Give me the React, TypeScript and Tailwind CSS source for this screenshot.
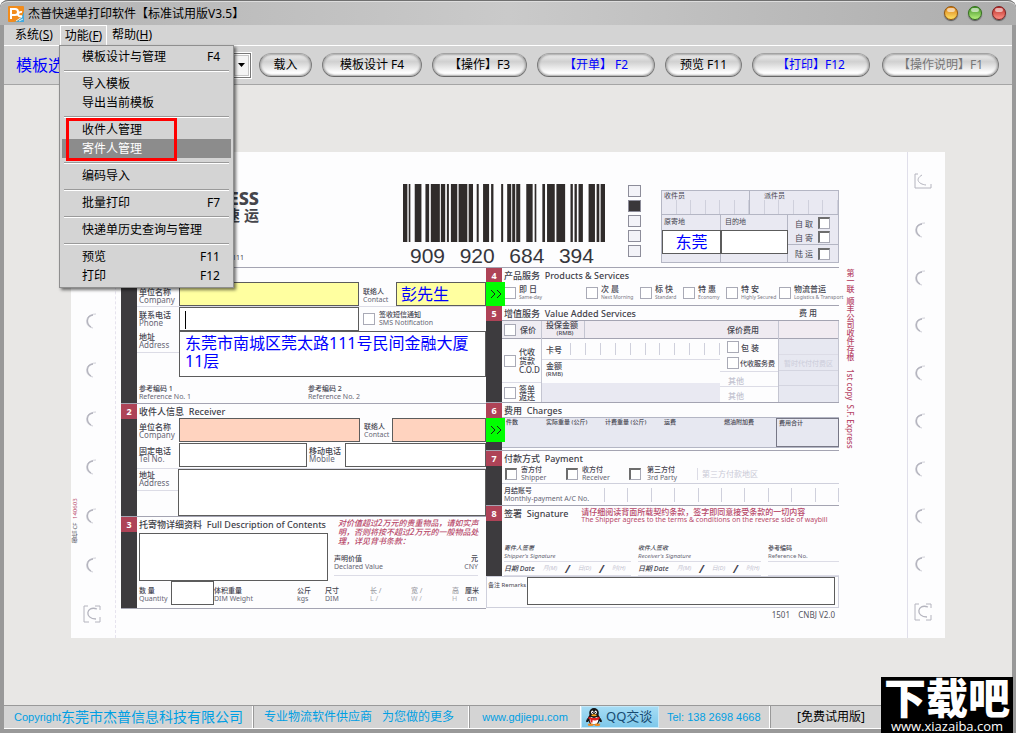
import React from 'react';

type BoxProps = React.InputHTMLAttributes<HTMLInputElement>;

function Field({ className = '', ...rest }: BoxProps) {
  return (
    <input
      {...rest}
      className={`h-6 min-w-0 rounded-none border border-[#5c5c5c] px-1 text-base text-[#0000ff] outline-none ${className}`}
    />
  );
}

function Tick({ className = '', ...rest }: BoxProps) {
  return (
    <input
      type="checkbox"
      {...rest}
      className={`size-3 shrink-0 appearance-none border border-[#a9aab6] bg-white ${className}`}
    />
  );
}

function SunkenTick(props: BoxProps) {
  return <Tick {...props} className="border-t-2 border-l-2 border-t-[#6d6d6d] border-l-[#6d6d6d]" />;
}

type BiProps = { cn: string; en: string; htmlFor?: string; className?: string; size?: string };

function Bi({ cn, en, htmlFor, className = '', size = 'text-[8px]' }: BiProps) {
  const body = (
    <>
      <span className="block font-medium text-[#44444f]">{cn}</span>
      <span className="block text-[#666674]">{en}</span>
    </>
  );
  const cls = `block leading-[8px] whitespace-nowrap ${size} ${className}`;
  return htmlFor ? (
    <label htmlFor={htmlFor} className={cls}>{body}</label>
  ) : (
    <div className={cls}>{body}</div>
  );
}

type SectionProps = {
  no: string;
  cn: string;
  en: string;
  className?: string;
  note?: React.ReactNode;
  children: React.ReactNode;
};

function Section({ no, cn, en, className = '', note, children }: SectionProps) {
  return (
    <section className={`flex border-t border-[#a4a4b2] ${className}`}>
      <div className="w-4 shrink-0 bg-[#3d3b3e]">
        <div className="flex h-[15px] items-center justify-center bg-[#ae4357] text-[9px] leading-none font-bold text-white">
          {no}
        </div>
      </div>
      <div className="flex min-w-0 flex-1 flex-col">
        <div className="flex h-[14px] shrink-0 items-center pl-0.5">
          <h2 className="pt-0.5 text-[9px] leading-[10px] font-medium whitespace-nowrap text-[#3f3f49]">
            {cn}&nbsp;&nbsp;{en}
          </h2>
          {note}
        </div>
        {children}
      </div>
    </section>
  );
}

function Cells({ count, className = '' }: { count: number; className?: string }) {
  return (
    <div className={`flex ${className}`}>
      {Array.from({ length: count }, (_, i) => (
        <div key={i} className="flex-1 border-r border-[#cfd0dc]" />
      ))}
    </div>
  );
}

function Hole() {
  return (
    <svg viewBox="0 0 14 18" className="h-[18px] w-[14px]" fill="none" stroke="#d0d0d8">
      <path d="M11 2C-1 2-1 15 8 16" strokeWidth="1" />
      <path d="M8 3C1 4 1 12 6 15" strokeWidth="1.3" stroke="#b4b4be" />
    </svg>
  );
}

function CornerHole() {
  return (
    <svg viewBox="0 0 18 18" className="size-[18px]" fill="none" stroke="#b4b4be">
      <path d="M5 1H1v16h5M12 1h5v4M17 12v5h-5" />
      <path d="M14 4C3 0 1 14 13 14" strokeWidth="1.3" />
    </svg>
  );
}

const bars: [number, number][] = [
  [190, 203], [207, 212], [225, 245], [257, 268], [273, 300], [303, 316], [321, 327],
  [333, 352], [356, 382], [386, 399], [410, 416], [429, 447], [453, 460], [483, 489],
  [501, 513], [516, 525], [528, 540], [558, 577], [583, 588], [606, 614], [620, 643],
  [648, 674], [690, 697], [702, 709], [714, 727], [744, 763], [768, 776], [780, 793],
];

function Barcode() {
  return (
    <div className="w-[203px] pt-8">
      <svg viewBox="190 0 606 174" preserveAspectRatio="none" className="h-[58px] w-full" fill="#302c2b">
        {bars.map(([a, b]) => (
          <rect key={a} x={a} y="0" width={b - a} height="174" />
        ))}
      </svg>
      <div className="flex justify-between pr-3 pl-[7px] pt-1 font-['Liberation_Sans',sans-serif] text-[21px] leading-[20px] text-[#36363c]">
        <span>909</span><span>920</span><span>684</span><span>394</span>
      </div>
    </div>
  );
}

function RoutingBox() {
  return (
    <div className="mt-[38px] h-[73px] w-[178px] border border-[#b4b6c4] bg-[#e9e9f2] text-[7px] leading-[9px] text-[#44444f]">
      <div className="grid h-6 grid-cols-2 border-b border-[#b4b6c4]">
        <div className="flex flex-col border-r border-[#b4b6c4]">
          <span className="pl-0.5">收件员</span>
          <Cells count={6} className="flex-1" />
        </div>
        <div className="flex flex-col">
          <span className="pl-[14px]">派件员</span>
          <Cells count={6} className="flex-1" />
        </div>
      </div>
      <div className="flex">
        <div className="h-[47px] w-[59px] border-r border-[#b4b6c4]">
          <label htmlFor="origin" className="block h-[15px] pt-0.5 pl-0.5">原寄地</label>
          <Field id="origin" defaultValue="东莞" className="w-[59px] bg-white text-center" />
        </div>
        <div className="h-[47px] w-[67px] border-r border-[#b4b6c4]">
          <label htmlFor="dest" className="block h-[15px] pt-0.5 pl-1">目的地</label>
          <Field id="dest" className="w-[67px] bg-white" />
        </div>
        <div className="flex-1 pt-px text-[8px]">
          {['自 取', '自 寄', '陆 运'].map((t, i) => (
            <label key={t} className={`flex items-center justify-between pr-2 pl-[7px] ${i === 2 ? 'h-[18px] border-t border-[#b4b6c4]' : 'h-[14px]'}`}>
              {t}
              <SunkenTick />
            </label>
          ))}
        </div>
      </div>
    </div>
  );
}

function Arrow({ label }: { label: string }) {
  return (
    <button
      aria-label={label}
      className="absolute top-0 left-full z-10 flex h-6 w-[19px] items-center justify-center bg-[#00ff00]"
    >
      <svg viewBox="0 0 12 10" className="h-[10px] w-3" fill="none" stroke="#1c1c1c">
        <path d="M1 1l4 4-4 4M7 1l4 4-4 4" />
      </svg>
    </button>
  );
}

function LeftColumn() {
  return (
    <div className="w-[365px]">
      <Section no="1" cn="寄件人信息" en="Shipper" className="h-[136px]">
        <div className="relative flex h-6 items-start">
          <Bi cn="单位名称" en="Company" htmlFor="company" className="w-[42px] pt-1.5 pl-0.5" />
          <Field id="company" className="w-[180px] bg-[#ffffa0]" />
          <Bi cn="联络人" en="Contact" htmlFor="contact" size="text-[7px]" className="w-[37px] pt-1.5 pl-1" />
          <Field id="contact" defaultValue="彭先生" className="flex-1 bg-[#ffffa0]" />
          <Arrow label="选择寄件人" />
        </div>
        <div className="flex h-[25px] items-start border-t border-[#dcdce6]">
          <Bi cn="联系电话" en="Phone" htmlFor="phone" className="w-[42px] pt-1 pl-0.5" />
          <div className="relative h-6 w-[180px]">
            <Field id="phone" className="w-full bg-white" />
            <span className="absolute top-1 left-1.5 h-[18px] w-px bg-black" />
          </div>
          <Tick id="sms" className="mt-1.5 ml-1" />
          <Bi cn="签收短信通知" en="SMS Notification" htmlFor="sms" size="text-[7px]" className="pt-1 pl-1" />
        </div>
        <div className="flex h-[47px] items-start">
          <Bi cn="地址" en="Address" htmlFor="address" className="h-[22px] w-[42px] border-b border-[#dcdce6] pt-0.5 pl-0.5" />
          <textarea
            id="address"
            defaultValue={'东莞市南城区莞太路111号民间金融大厦11层'}
            className="h-[46px] flex-1 resize-none overflow-hidden border border-[#5c5c5c] bg-white pt-0.5 pl-[5px] text-base leading-[18px] text-[#0000ff] outline-none"
          />
        </div>
        <div className="flex flex-1 items-center pt-1 pl-0.5">
          <Bi cn="参考编码 1" en="Reference No. 1" size="text-[7px]" className="w-[169px]" />
          <Bi cn="参考编码 2" en="Reference No. 2" size="text-[7px]" />
        </div>
      </Section>
      <Section no="2" cn="收件人信息" en="Receiver" className="h-[113px]">
        <div className="relative flex h-[25px] items-start">
          <Bi cn="单位名称" en="Company" htmlFor="rcompany" className="w-[42px] pt-[5px] pl-0.5" />
          <Field id="rcompany" className="w-[181px] bg-[#ffd3bf]" />
          <Bi cn="联络人" en="Contact" htmlFor="rcontact" size="text-[7px]" className="w-8 pt-[5px] pl-1" />
          <Field id="rcontact" className="flex-1 bg-[#ffd3bf]" />
          <Arrow label="选择收件人" />
        </div>
        <div className="flex h-[25px] items-start">
          <Bi cn="固定电话" en="Tel No." htmlFor="tel" className="w-[42px] pt-1 pl-0.5" />
          <Field id="tel" className="w-32 bg-white" />
          <Bi cn="移动电话" en="Mobile" htmlFor="mobile" className="w-[38px] pt-1 pl-0.5" />
          <Field id="mobile" className="flex-1 bg-white" />
        </div>
        <div className="flex flex-1 items-start border-t border-[#dcdce6]">
          <Bi cn="地址" en="Address" htmlFor="raddress" className="h-[22px] w-[41px] border-b border-[#dcdce6] pt-0.5 pl-0.5" />
          <textarea id="raddress" className="h-[47px] flex-1 resize-none border border-[#5c5c5c] bg-white outline-none" />
        </div>
      </Section>
      <Section no="3" cn="托寄物详细资料" en="Full Description of Contents" className="h-[93px] border-b">
        <div className="flex h-[50px] gap-1.5 pt-0.5 pl-0.5">
          <textarea aria-label="托寄物详细资料" className="h-12 w-[189px] resize-none border border-[#5c5c5c] bg-white outline-none" />
          <div className="relative min-w-0 flex-1 pr-2">
            <p className="absolute -top-[15px] left-1 w-[144px] text-[8px] leading-[9px] font-medium text-[#b8496a] italic">
              对价值超过2万元的贵重物品，请如实声明，否则将按不超过2万元的一般物品处理，详见背书条款：
            </p>
            <div className="mt-[22px] flex justify-between border-b border-[#dcdce6] pb-1">
              <Bi cn="声明价值" en="Declared Value" size="text-[7px]" />
              <Bi cn="元" en="CNY" className="text-right" size="text-[7px]" />
            </div>
          </div>
        </div>
        <div className="flex h-[25px] items-start pl-0.5">
          <Bi cn="数 量" en="Quantity" htmlFor="qty" size="text-[7px]" className="w-8 pt-1.5" />
          <Field id="qty" className="w-[43px] bg-white" />
          <Bi cn="体积重量" en="DIM Weight" size="text-[7px]" className="w-[83px] pt-1.5" />
          <Bi cn="公斤" en="kgs" size="text-[7px]" className="w-[28px] pt-1.5" />
          <Bi cn="尺寸" en="DIM" size="text-[7px]" className="w-[45px] pt-1.5" />
          <Bi cn="长 /" en="L /" size="text-[7px]" className="w-[41px] pt-1.5 opacity-50" />
          <Bi cn="宽 /" en="W /" size="text-[7px]" className="w-[41px] pt-1.5 opacity-50" />
          <Bi cn="高" en="H" size="text-[7px]" className="w-[13px] pt-1.5 opacity-50" />
          <Bi cn="厘米" en="cm" size="text-[7px]" className="pt-1.5 text-center" />
        </div>
      </Section>
    </div>
  );
}

const services: [string, string][] = [
  ['即 日', 'Same-day'], ['次 晨', 'Next Morning'], ['标 快', 'Standard'],
  ['特 惠', 'Economy'], ['特 安', 'Highly Secured'], ['物流普运', 'Logistics & Transport'],
];

function ValueAdded() {
  return (
    <div className="flex flex-1 border-t border-[#a4a4b2] text-[8px] leading-[9px] font-medium text-[#44444f]">
      <div className="flex w-10 flex-col border-r border-[#c4c5d1]">
        <label className="flex h-[18px] items-center gap-1 border-b border-[#a4a4b2] bg-[#efedf3] pl-0.5"><Tick />保价</label>
        <label className="flex h-11 items-center gap-[3px] border-b border-[#dcdce6] pl-0.5">
          <Tick /><span>代收<br />货款<br />C.O.D</span>
        </label>
        <label className="flex flex-1 items-center gap-[3px] pl-0.5"><Tick /><span className="leading-[8px]">签单<br />返还</span></label>
      </div>
      <div className="flex w-[178px] flex-col">
        <div className="flex h-[18px] border-b border-[#a4a4b2] bg-[#efebf1]">
          <div className="w-[43px] border-r border-[#c4c5d1] pl-1 leading-[8px]">投保金额<div className="text-center text-[6px]">(RMB)</div></div>
        </div>
        <div className="flex h-[21px] items-center border-b border-[#dcdce6]">
          <span className="w-7 pl-1">卡号</span>
          <Cells count={10} className="h-3 flex-1 border-l border-[#cfd0dc]" />
        </div>
        <div className="h-[23px] pt-0.5 pl-1 leading-[8px]">金额<div className="text-[6px]">(RMB)</div></div>
        <div className="flex-1 bg-[#e9e9f2]" />
      </div>
      <div className="flex w-[59px] flex-col border-r border-[#c4c5d1]">
        <div className="flex h-[18px] items-center border-b border-[#a4a4b2] bg-[#efebf1] pl-[7px]">保价费用</div>
        <label className="flex h-4 items-center gap-0.5 pl-[7px]"><Tick />包 装</label>
        <label className="flex h-4 items-center gap-px pl-[7px] text-[7px] whitespace-nowrap"><Tick />代收服务费</label>
        <div className="h-[15px] border-t border-[#dcdce6] pt-1 pl-2 text-[#c3c3d0]">其他</div>
        <div className="flex-1 border-t border-[#dcdce6] pt-1 pl-2 text-[#c3c3d0]">其他</div>
      </div>
      <div className="flex flex-1 flex-col border-r border-[#c4c5d1] bg-[#e7e8f1]">
        <div className="h-[18px] border-b border-[#a4a4b2] bg-[#f1ebf1]" />
        <div className="h-4 border-b border-[#dcdce6]" />
        <div className="h-4 border-b border-[#d4d5e0] pt-1 text-center text-[7px] whitespace-nowrap text-[#cfd0dd]">暂时代付付费区</div>
        <div className="h-[15px] border-b border-[#d4d5e0]" />
      </div>
    </div>
  );
}

function SignDate() {
  return (
    <div className="flex items-center gap-2 border-b border-[#dcdce6] text-[7px] leading-[13px] whitespace-nowrap text-[#c3c3d0] italic">
      <span className="font-medium text-[#44444f]">日期 Date</span>
      <span className="text-[6px]">月(M)</span>
      <b className="text-[11px] text-[#44444f]">/</b>
      <span className="text-[6px]">日(D)</span>
      <b className="text-[11px] text-[#44444f]">/</b>
      <span className="text-[6px]">时(H)</span>
    </div>
  );
}

function RightColumn() {
  return (
    <div className="w-[353px]">
      <Section no="4" cn="产品服务" en="Products & Services" className="h-[38px]">
        <div className="grid grid-cols-[82px_54px_43px_43px_53px_1fr] pt-[3px] pl-0.5">
          {services.map(([cn, en]) => (
            <label key={cn} className="flex items-start gap-[3px] text-[8px] leading-[8px] whitespace-nowrap text-[#44444f]">
              <Tick className="mt-0.5" />
              <span><span className="block font-medium">{cn}</span><span className="block text-[5px] text-[#777783]">{en}</span></span>
            </label>
          ))}
        </div>
      </Section>
      <Section
        no="5" cn="增值服务" en="Value Added Services" className="h-[97px]"
        note={<span className="ml-auto pr-[22px] text-[8px] font-medium text-[#44444f]">费 用</span>}
      >
        <ValueAdded />
      </Section>
      <Section no="6" cn="费用" en="Charges" className="h-12">
        <div className="grid h-[31px] grid-cols-[40px_59px_59px_60px_56px_1fr] border-y border-[#b4b6c4] bg-[#e7e8f1] text-[6px] leading-[8px] font-medium whitespace-nowrap text-[#44444f]">
          <span className="pl-1">件数</span>
          <span className="pl-1">实际重量 (公斤)</span>
          <span className="pl-1">计费重量 (公斤)</span>
          <span className="pl-1">运费</span>
          <span className="pl-1">燃油附加费</span>
          <span className="border border-[#777786] pl-0.5">费用合计</span>
        </div>
      </Section>
      <Section no="7" cn="付款方式" en="Payment" className="h-[55px]">
        <div className="flex h-[19px] items-center border-b border-[#cfd0dc] pl-[3px]">
          <SunkenTick id="pay1" /><Bi cn="寄方付" en="Shipper" htmlFor="pay1" size="text-[7px]" className="w-[49px] pl-1" />
          <SunkenTick id="pay2" /><Bi cn="收方付" en="Receiver" htmlFor="pay2" size="text-[7px]" className="w-[51px] pl-1" />
          <SunkenTick id="pay3" /><Bi cn="第三方付" en="3rd Party" htmlFor="pay3" size="text-[7px]" className="w-14 pl-1.5" />
          <span className="border-l border-[#dcdce6] pl-1 text-[8px] text-[#c9c9d6]">第三方付款地区</span>
        </div>
        <div className="flex flex-1 items-center pl-0.5">
          <Bi cn="月结账号" en="Monthly-payment A/C No." size="text-[7px]" className="w-[100px]" />
          <Cells count={10} className="h-[14px] flex-1 border-l border-[#cfd0dc]" />
        </div>
      </Section>
      <Section
        no="8" cn="签署" en="Signature" className="h-[71px]"
        note={
          <p className="pt-1.5 pl-[13px] leading-[8px] whitespace-nowrap text-[#b8496a]">
            <span className="block text-[8px] font-medium">请仔细阅读背面所载契约条款，签字即同意接受条款的一切内容</span>
            <span className="block text-[7px]">The Shipper agrees to the terms &amp; conditions on the reverse side of waybill</span>
          </p>
        }
      >
        <div className="mt-auto grid grid-cols-[127px_123px_1fr] gap-x-[7px] pl-0.5">
          <Bi cn="寄件人签署" en="Shipper's Signature" size="text-[6px]" className="border-b border-[#dcdce6] pb-px italic" />
          <Bi cn="收件人签收" en="Receiver's Signature" size="text-[6px]" className="border-b border-[#dcdce6] pb-px italic" />
          <Bi cn="参考编码" en="Reference No." size="text-[6px]" className="border-b border-[#dcdce6] pb-px" />
          <SignDate />
          <SignDate />
          <div className="border-b border-[#dcdce6]" />
        </div>
      </Section>
      <div className="flex h-8 border border-[#cfd0dc] pr-[3px]">
        <label htmlFor="remarks" className="w-10 pt-1 pl-px text-[6px] leading-[8px] whitespace-nowrap text-[#44444f]">备注 Remarks</label>
        <textarea id="remarks" className="h-7 flex-1 resize-none border border-[#5c5c5c] bg-white outline-none" />
      </div>
      <div className="pt-0.5 pr-1 text-right text-[8px] leading-[10px] text-[#55555f]">1501&nbsp;&nbsp;&nbsp; CNBJ V2.0</div>
    </div>
  );
}

function Waybill() {
  return (
    <form className="flex min-h-[486px] w-[874px] shrink-0 bg-[#fdfdfe]">
      <div className="flex w-[45px] justify-between border-r border-dashed border-[#e6e3ee] pt-[160px] pb-[15px]">
        <div className="flex rotate-180 items-center gap-1 pt-20 text-[6px] leading-[9px] text-[#55555f] [writing-mode:vertical-rl]">
          <span>御信 CF</span>
          <span className="text-[#b8496a]">140603</span>
        </div>
        <div className="flex flex-col items-center justify-between pr-[14px]">
          {[0, 1, 2, 3, 4, 5].map((i) => <Hole key={i} />)}
          <CornerHole />
        </div>
      </div>
      <div className="flex-1 pl-[5px]">
        <div className="flex h-[115px]">
          <div className="w-[282px] pt-[37px] text-[#45454b]">
            <div className="w-[138px] text-right text-[18px] leading-[18px] font-extrabold">EXPRESS</div>
            <div className="w-[138px] text-right text-[15px] leading-[17px] font-bold">速 运</div>
            <div className="w-[123px] pt-[30px] text-right text-[7px] leading-[8px]">95338 4008111111</div>
          </div>
          <Barcode />
          <div className="flex w-[55px] flex-col gap-[3px] pt-[33px] pl-[22px]">
            {[0, 1, 2, 3, 4].map((i) => (
              <div key={i} className={`h-3 w-[13px] border border-[#8d8d9a] ${i === 1 ? 'bg-[#3a373a]' : 'bg-[#f3f3f8]'}`} />
            ))}
          </div>
          <RoutingBox />
        </div>
        <div className="flex">
          <LeftColumn />
          <RightColumn />
          <div className="flex items-center self-start pt-0.5 pl-1.5 text-[8px] leading-[11px] font-medium whitespace-nowrap text-[#b8496a] [writing-mode:vertical-rl]">
            <span>第一联&nbsp;&nbsp;顺丰公司收件存根</span>
            <span className="pt-2">1st copy&nbsp;&nbsp;S.F. Express</span>
          </div>
        </div>
      </div>
      <div className="flex w-[38px] flex-col items-start justify-between border-l border-[#e0dfea] pt-[21px] pb-[17px] pl-1.5">
        <svg viewBox="0 0 18 18" className="size-[18px]" fill="none" stroke="#b4b4be">
          <path d="M4 1H1v14h16v-4M8 2C1 6 4 11 12 12" />
        </svg>
        {[0, 1, 2, 3, 4, 5, 6, 7].map((i) => <Hole key={i} />)}
        <CornerHole />
      </div>
    </form>
  );
}

type Entry = { text: string; hotkey?: string; active?: boolean };

const menuGroups: Entry[][] = [
  [{ text: '模板设计与管理', hotkey: 'F4' }],
  [{ text: '导入模板' }, { text: '导出当前模板' }],
  [{ text: '收件人管理' }, { text: '寄件人管理', active: true }],
  [{ text: '编码导入' }],
  [{ text: '批量打印', hotkey: 'F7' }],
  [{ text: '快递单历史查询与管理' }],
  [{ text: '预览', hotkey: 'F11' }, { text: '打印', hotkey: 'F12' }],
];

function FunctionMenu() {
  return (
    <div className="absolute top-full -left-0.5 z-30 w-[175px] border border-[#8f8f8f] bg-[#d4d4d4] px-0.5 pt-px pb-0.5 shadow-[2px_2px_3px_rgba(0,0,0,0.55)]">
      {menuGroups.map((group, g) => (
        <div key={g}>
          {g > 0 && <div className="mx-0.5 mt-1 mb-0.5 h-0.5 border-t border-b border-t-[#9a9a9a] border-b-white" />}
          {group.map((item) => (
            <button
              key={item.text}
              className={`flex h-[19px] w-full items-center justify-between pr-[11px] pl-5 text-xs whitespace-nowrap ${item.active ? 'bg-[#8c8c8c] text-white' : 'text-black'}`}
            >
              <span>{item.text}</span>
              <span>{item.hotkey}</span>
            </button>
          ))}
        </div>
      ))}
      <div className="pointer-events-none absolute top-[72px] left-1.5 h-[43px] w-[111px] border-3 border-[#ff0000]" />
    </div>
  );
}

function Pill({ className = '', children }: { className?: string; children: React.ReactNode }) {
  return (
    <button
      className={`h-6 shrink-0 rounded-full border border-t-[#a2a2a2] border-r-[#7c7c7c] border-b-[#686868] border-l-[#7c7c7c] bg-linear-to-b from-[#f0f0f0] via-[#d0d0d0] via-35% to-white to-85% text-xs leading-none whitespace-nowrap shadow-[inset_0_0_2px_1px_#a4a4a4] ${className}`}
    >
      {children}
    </button>
  );
}

function Orb({ label, className }: { label: string; className: string }) {
  return (
    <button aria-label={label} className={`flex size-[14px] justify-center rounded-full border shadow-[0_1px_1px_#555] ${className}`}>
      <span className="mt-px h-1 w-2 rounded-full bg-white/60" />
    </button>
  );
}

function AppIcon() {
  return (
    <svg viewBox="0 0 16 16" className="size-4">
      <rect width="16" height="16" rx="1" fill="#f28c1c" />
      <path d="M16 5v11H5c6 0 9-4 11-11z" fill="#3fa9e0" />
      <path d="M3 13V3h4a3 3 0 010 6H3M14 6c-5-1-5 6 0 4" fill="none" stroke="#fff" strokeWidth="2" />
      <path d="M8 15l6-4M11 15l4-2" stroke="#d8f0fb" />
    </svg>
  );
}

function Penguin() {
  return (
    <svg viewBox="0 0 16 18" className="h-[18px] w-4">
      <path d="M3 9C1 11 0 14 1 14l2-2M13 9c2 2 3 5 2 5l-2-2" fill="#151515" stroke="#151515" />
      <ellipse cx="8" cy="11" rx="6" ry="6" fill="#151515" />
      <ellipse cx="8" cy="12" rx="4.3" ry="4.5" fill="#fff" />
      <ellipse cx="8" cy="5" rx="4.8" ry="5" fill="#151515" />
      <ellipse cx="6.3" cy="4.3" rx="1.2" ry="1.7" fill="#fff" />
      <ellipse cx="9.7" cy="4.3" rx="1.2" ry="1.7" fill="#fff" />
      <circle cx="6.6" cy="4.5" r=".6" />
      <circle cx="9.4" cy="4.5" r=".6" />
      <ellipse cx="8" cy="7.2" rx="2.8" ry="1" fill="#f6a51c" />
      <path d="M2.500 8.500c3 2 8 2 11 0v2.500c-3 1.600-5 1.600-7 1.300V14.500H4.500v-3l-2-.8z" fill="#e22020" />
      <ellipse cx="4.700" cy="16.800" rx="3" ry="1.200" fill="#f08a1c" />
      <ellipse cx="11.300" cy="16.800" rx="3" ry="1.200" fill="#f08a1c" />
    </svg>
  );
}

export default function App() {
  return (
    <div className="relative flex min-h-screen w-full flex-col rounded-t-lg border-x-4 border-b-4 border-[#999] bg-[#d4d4d4] font-['Noto_Sans','Noto_Sans_CJK_SC',sans-serif] text-black">
      <header className="-mx-1 flex h-[25px] items-center rounded-t-lg border-t border-[#707070] bg-linear-to-r from-[#b2b2b2] via-[#cacaca] to-[#adadad] pt-0.5 pr-2.5 pl-2 shadow-[inset_0_1px_0_#ddd]">
        <AppIcon />
        <h1 className="pl-1 text-xs">杰普快递单打印软件【标准试用版V3.5】</h1>
        <div className="ml-auto flex gap-2.5 pb-0.5">
          <Orb label="最小化" className="border-[#94570b] bg-linear-to-b from-[#d67a08] to-[#ffe264]" />
          <Orb label="最大化" className="border-[#33701b] bg-linear-to-b from-[#3c8f22] to-[#b5f07c]" />
          <Orb label="关闭" className="border-[#802020] bg-linear-to-b from-[#b52222] to-[#ff9186]" />
        </div>
      </header>

      <nav className="flex h-5 items-stretch text-xs">
        <button className="w-14 pl-1">系统(<u>S</u>)</button>
        <div className="relative w-[47px] border border-b-0 border-white">
          <button className="h-full w-full whitespace-nowrap">功能(<u>F</u>)</button>
          <FunctionMenu />
        </div>
        <button className="w-[50px]">帮助(<u>H</u>)</button>
      </nav>

      <div className="flex h-10 items-center border-t border-b border-t-white border-b-[#a5a5a5] pl-3">
        <label htmlFor="template" className="w-[74px] text-base whitespace-nowrap text-[#0000ff]">模板选择</label>
        <div className="relative w-[161px]">
          <select id="template" className="block h-[25px] w-full appearance-none rounded-none border border-[#777] bg-white pl-1 text-xs outline outline-white" />
          <div className="pointer-events-none absolute top-0.5 right-0.5 flex h-[21px] w-[15px] items-center justify-center border border-[#c6c6c6] bg-[#f4f4f4]">
            <svg viewBox="0 0 7 4" className="h-1 w-[7px]"><path d="M0 0h7L3.500 4z" /></svg>
          </div>
        </div>
        <div className="flex gap-2.5 pl-2">
          <Pill className="w-[53px]">载入</Pill>
          <Pill className="w-[100px]">模板设计 F4</Pill>
          <Pill className="w-[95px]">【操作】F3</Pill>
          <Pill className="w-[118px] text-[#0000ff]">【开单】 F2</Pill>
          <Pill className="w-[77px]">预览 F11</Pill>
          <Pill className="w-[118px] text-[#0000ff]">【打印】F12</Pill>
          <Pill className="ml-0.5 w-[117px] text-[#777]">【操作说明】F1</Pill>
        </div>
      </div>

      <main className="flex flex-1 items-center justify-center bg-[#e8e7e5]">
        <Waybill />
      </main>

      <footer className="flex h-6 items-stretch border-t border-b border-t-[#999] border-b-white text-xs text-[#009fe3]">
        <div className="flex w-[249px] items-center border-r border-white pl-2.5 whitespace-nowrap">
          <span className="font-['Liberation_Sans',sans-serif] text-[11px]">Copyright</span>
          <span className="text-[14px] leading-5">东莞市杰普信息科技有限公司</span>
        </div>
        <div className="flex w-54 items-center gap-2.5 border-r border-l border-r-white border-l-[#999] pl-2.5 whitespace-nowrap">
          <span>专业物流软件供应商</span><span>为您做的更多</span>
        </div>
        <a href="#home" className="flex w-28 items-center justify-center border-r border-l border-r-white border-l-[#999] font-['Liberation_Sans',sans-serif] text-[11px]">www.gdjiepu.com</a>
        <button className="flex w-[78px] items-center gap-1 border border-[#c4e8f8] bg-linear-to-b from-[#a5dcf4] to-[#7ec8ea] pl-1 text-[13px] whitespace-nowrap text-[#174a70]">
          <Penguin />QQ交谈
        </button>
        <div className="flex w-[111px] items-center border-r border-white pl-2 font-['Liberation_Sans',sans-serif] text-[11px] whitespace-nowrap">Tel: 138 2698 4668</div>
        <div className="flex items-center border-l border-[#999] pl-[26px] text-black">[免费试用版]</div>
      </footer>

      <div className="absolute -right-px -bottom-1 z-20 flex h-14 w-[132px] flex-col items-center bg-black text-white">
        <span className="text-[42px] leading-[42px] font-black whitespace-nowrap">下载吧</span>
        <span className="font-['Open_Sans',sans-serif] text-[13px] leading-[14px]">www.xiazaiba.com</span>
      </div>
    </div>
  );
}
